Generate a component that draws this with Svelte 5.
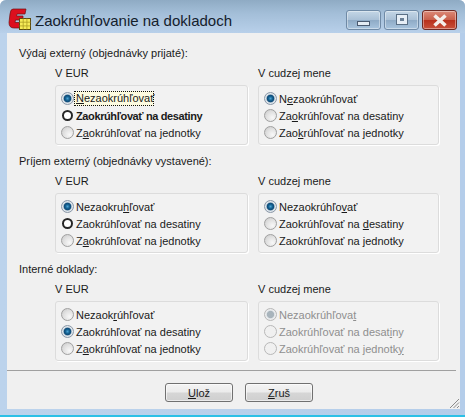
<script lang="ts">
	// each label: before / underlined letter / after
	type Opt = { a: string; u: string; b: string; checked?: boolean; focus?: boolean; ring?: boolean; bold?: boolean };

	const opt = (a: string, u: string, b: string, extra = {}): Opt => ({ a, u, b, ...extra });

	const sections = [
		{
			title: 'Výdaj externý (objednávky prijaté):',
			eur: [
				opt('', 'N', 'ezaokrúhľovať', { checked: true, focus: true }),
				opt('Zaokrúhľovať na desatiny', '', '', { ring: true, bold: true }),
				opt('Z', 'a', 'okrúhľovať na jednotky')
			],
			other: [
				opt('N', 'e', 'zaokrúhľovať', { checked: true }),
				opt('Za', 'o', 'krúhľovať na desatiny'),
				opt('Zao', 'k', 'rúhľovať na jednotky')
			]
		},
		{
			title: 'Príjem externý (objednávky vystavené):',
			eur: [
				opt('Nezaokru', 'h', 'ľovať', { checked: true }),
				opt('Zaokrúhľovať na desatiny', '', '', { ring: true }),
				opt('Z', 'a', 'okrúhľovať na jednotky')
			],
			other: [
				opt('Nezaokrúhľo', 'v', 'ať', { checked: true }),
				opt('Zaokrúhľovať na ', 'd', 'esatiny'),
				opt('Zaokrúhľovať na jednotky', '', '')
			]
		},
		{
			title: 'Interné doklady:',
			eur: [
				opt('Nezaok', 'r', 'úhľovať'),
				opt('Zaokrúhľovať na desatiny', '', '', { checked: true }),
				opt('Z', 'a', 'okrúhľovať na jednotky')
			],
			other: [
				opt('Nezaokrúhľova', 't', '', { checked: true }),
				opt('Zaokrúhľovať na desat', 'i', 'ny'),
				opt('Zaokrúhľovať na jednotk', 'y', '')
			],
			disabled: true
		}
	];
</script>

{#snippet group(heading: string, options: Opt[], disabled: boolean, wide: boolean)}
	<div class="col" class:wide>
		<div class="heading">{heading}</div>
		<div class="box">
			{#each options as o}
				<div class="row" class:disabled class:bold={o.bold}>
					<span class="radio" class:checked={o.checked} class:ring={o.ring}></span>
					<span class="label" class:focus={o.focus}>{o.a}<u>{o.u}</u>{o.b}</span>
				</div>
			{/each}
		</div>
	</div>
{/snippet}

<div class="window">
	<header class="titlebar">
		<svg class="logo" width="24" height="24" viewBox="0 0 24 24">
			<path d="M5 1H18L17 6H9L8.500 8H15V12H7.500L7 14.500H12V20H6Q1 20 1 14.500L2 6Q2.500 1 5 1z" fill="#dc0f1e" stroke="#6e1010" stroke-width=".7" />
			<rect x="11.500" y="10.500" width="11" height="11" fill="#f6ea58" stroke="#5c4a10" />
			<path d="M15.200 10.500v11M18.900 10.500v11M11.500 14.200h11M11.500 17.900h11" stroke="#ad9d24" stroke-width=".8" />
		</svg>
		<h1>Zaokrúhľovanie na dokladoch</h1>
		<div class="controls">
			<button class="ctl" aria-label="Minimize"><span class="min"></span></button>
			<button class="ctl" aria-label="Maximize"><span class="max"></span></button>
			<button class="ctl close" aria-label="Close">
				<svg width="16" height="13" viewBox="0 0 16 13"><path d="M2.500 1.500l11 10M13.500 1.500l-11 10" stroke="#f4eeea" stroke-width="3.600" /></svg>
			</button>
		</div>
	</header>

	<main class="client">
		{#each sections as s}
			<section>
				<div class="title">{s.title}</div>
				<div class="cols">
					{@render group('V EUR', s.eur, false, true)}
					{@render group('V cudzej mene', s.other, !!s.disabled, false)}
				</div>
			</section>
		{/each}

		<footer>
			<button class="btn"><u>U</u>lož</button>
			<button class="btn"><u>Z</u>ruš</button>
			<svg class="grip" width="12" height="12" viewBox="0 0 12 12"><path d="M11 2L2 11M11 5.500L5.500 11M11 9L9 11" stroke="#8a8a8a" stroke-width="1" /></svg>
		</footer>
	</main>
</div>

<style>
	:global(body) {
		margin: 0;
		background: #fff;
	}

	.window {
		width: 465px;
		height: 417px;
		box-sizing: border-box;
		display: flex;
		flex-direction: column;
		border-bottom: 2px solid #2cc0e6;
		border-radius: 6px 6px 0 0;
		background: linear-gradient(90deg, #bcd3ec 0, #b4cdea 100%);
		font-family: 'Liberation Sans', Arial, sans-serif;
		font-size: 11px;
		color: #1a1a1a;
		overflow: hidden;
	}

	.titlebar {
		height: 33px;
		flex: none;
		display: flex;
		align-items: flex-start;
		padding: 0 8px 0 8px;
		background: linear-gradient(180deg, #8fabc4 0, #a3bed8 40%, #b8d0ea 100%);
	}

	.logo {
		margin-top: 8px;
		margin-right: 3px;
	}

	h1 {
		margin: 12px 0 0;
		font-size: 15px;
		line-height: 18px;
		font-weight: normal;
		color: #14202c;
		flex: 1;
	}

	.controls {
		display: flex;
		margin-top: 10px;
		gap: 3px;
	}

	.ctl {
		width: 35px;
		height: 20px;
		padding: 0;
		display: flex;
		align-items: center;
		justify-content: center;
		border: 1px solid #6f8aa6;
		border-radius: 3px;
		background: linear-gradient(180deg, #c4d6e6 0, #a9c0d6 50%, #8fabc6 52%, #a8c4de 100%);
		box-shadow: inset 0 0 0 1px rgba(255, 255, 255, 0.4);
	}

	.ctl.close {
		border-color: #6e2a24;
		background: linear-gradient(180deg, #dc8a78 0, #c9604c 48%, #b8301c 52%, #c8503a 100%);
	}

	.min {
		width: 11px;
		height: 3px;
		margin-top: 7px;
		border: 1px solid #4a5a70;
		background: #e4ecf4;
	}

	.max {
		width: 4px;
		height: 3px;
		margin-top: -1px;
		border: 3px solid #e6eef6;
		background: #6a7f95;
		outline: 1px solid #5a6f85;
	}

	.client {
		flex: 1;
		margin: 0 5px 6px 7px;
		padding: 13px 14px 0 12px;
		background: #f0f0f0;
		display: flex;
		flex-direction: column;
		position: relative;
	}

	section {
		margin-bottom: 9px;
	}

	.title {
		line-height: 14px;
	}

	.cols {
		display: flex;
		gap: 10px;
		margin-top: 6px;
		padding-left: 36px;
	}

	.col {
		width: 181px;
	}

	.col.wide {
		width: 193px;
	}

	.heading {
		line-height: 14px;
		margin-bottom: 5px;
	}

	.box {
		height: 60px;
		box-sizing: border-box;
		padding: 4px 5px;
		border: 1px solid #dcdcdc;
		border-radius: 3px;
		background: #f2f2f2;
		box-shadow: 1px 1px 0 #fff;
	}

	.row {
		height: 17px;
		display: flex;
		align-items: center;
		gap: 2px;
		white-space: nowrap;
	}

	.row.bold {
		font-weight: bold;
		letter-spacing: -0.035em;
	}

	.row.disabled {
		color: #8f8f8f;
	}

	.radio {
		width: 13px;
		height: 13px;
		flex: none;
		box-sizing: border-box;
		border-radius: 50%;
		border: 1px solid #a0a0a0;
		background: radial-gradient(circle at 68% 70%, #f8f8f8 0, #e0e0e0 55%, #c6c6c6 100%);
	}

	.radio.checked {
		border-color: #8a98a8;
		background: radial-gradient(circle closest-side, #4aa2d4 0, #14608f 38%, #0e4a78 62%, #b8c8d4 76%, #e8eef2 88%, #d4dae0 100%);
	}

	.radio.ring {
		width: 11px;
		height: 11px;
		margin: 0 1px;
		border: 2px solid #262626;
		background: #fff;
	}

	.disabled .radio {
		border-color: #b8b8b8;
		background: #f0f0f0;
	}

	.disabled .radio.checked {
		background: radial-gradient(circle closest-side, #a8b4bc 0, #a8b4bc 58%, #dfe3e6 74%, #eef0f2 88%, #e8e8e8 100%);
	}

	.label.focus {
		line-height: 15px;
		margin-left: -2px;
		padding: 0 0 0 2px;
		background: #fdfbe0;
		outline: 1px dotted #111;
		outline-offset: -1px;
	}

	footer {
		margin: 0 -14px 0 -12px;
		padding: 12px 0 0 15px;
		border-top: 1px solid #a0a0a0;
		display: flex;
		justify-content: center;
		gap: 12px;
		position: relative;
		width: 449px;
		box-sizing: border-box;
	}

	.btn {
		width: 68px;
		height: 19px;
		padding: 0;
		font: inherit;
		color: #1a1a1a;
		border: 1px solid #707070;
		border-radius: 3px;
		background: linear-gradient(180deg, #f4f4f4 0, #ebebeb 48%, #d6d6d6 52%, #cfcfcf 100%);
		box-shadow: inset 0 0 0 1px rgba(255, 255, 255, 0.6);
	}

	.grip {
		position: absolute;
		right: -4px;
		bottom: -7px;
	}
</style>
